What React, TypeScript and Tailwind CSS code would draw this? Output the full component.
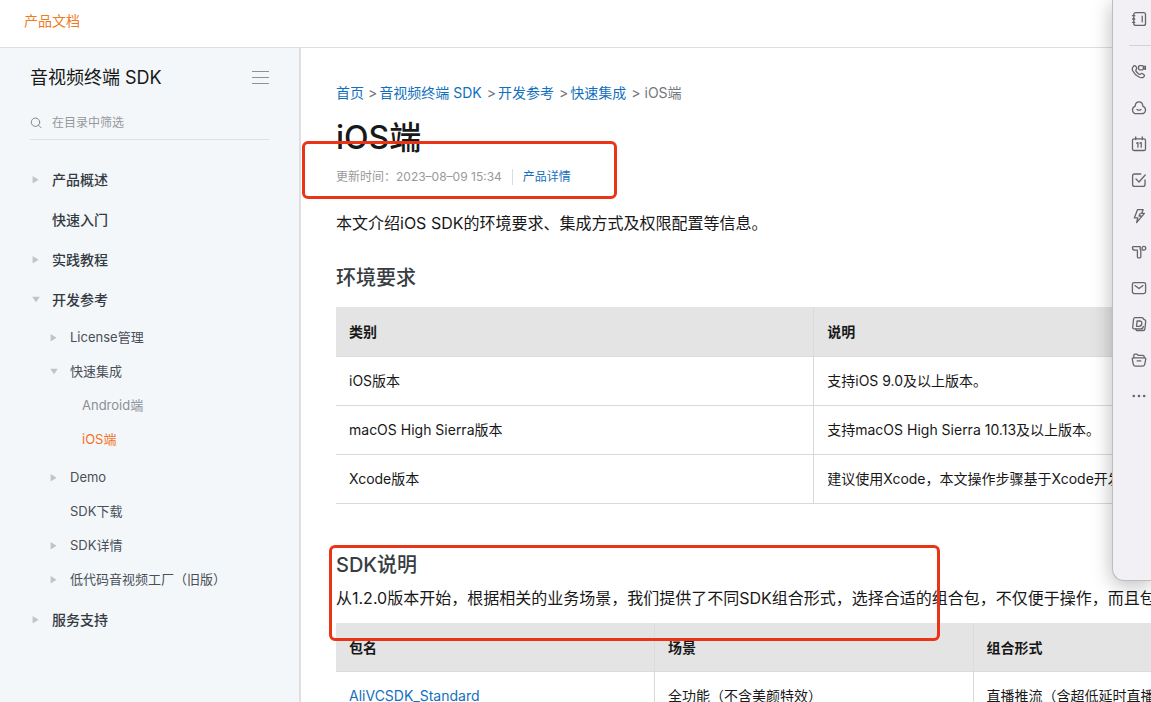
import { Fragment, type ReactNode } from "react";

type NavItem = {
  label: string;
  arrow?: "right" | "down";
  active?: boolean;
  children?: NavItem[];
};

const nav: NavItem[] = [
  { label: "产品概述", arrow: "right" },
  { label: "快速入门" },
  { label: "实践教程", arrow: "right" },
  {
    label: "开发参考",
    arrow: "down",
    children: [
      { label: "License管理", arrow: "right" },
      {
        label: "快速集成",
        arrow: "down",
        children: [{ label: "Android端" }, { label: "iOS端", active: true }],
      },
      { label: "Demo", arrow: "right" },
      { label: "SDK下载" },
      { label: "SDK详情", arrow: "right" },
      { label: "低代码音视频工厂（旧版）", arrow: "right" },
    ],
  },
  { label: "服务支持", arrow: "right" },
];

const levelStyles = [
  "h-10 pl-[31px] text-sm font-medium text-[#333a42]",
  "h-[34px] pl-[49px] text-[13px] text-[#4a4f57]",
  "h-[34px] pl-[61px] text-[13px] text-[#8b9096]",
];

const listStyles = ["", "pt-px pb-[3px]", "pb-1"];

function Arrow({ dir }: { dir?: "right" | "down" }) {
  return (
    <svg viewBox="0 0 10 10" className="size-[10px] shrink-0 fill-[#c0c4c9]" aria-hidden="true">
      {dir === "right" && <path d="M1.600 1v7.400L7.600 4.700z" />}
      {dir === "down" && <path d="M1.200 1.800h7.600L5 7.200z" />}
    </svg>
  );
}

function NavList({ items, level }: { items: NavItem[]; level: number }) {
  return (
    <ul className={listStyles[level]}>
      {items.map((item) => (
        <li key={item.label}>
          <a href="#" className={`flex items-center ${levelStyles[level]}`}>
            {level < 2 && <Arrow dir={item.arrow} />}
            <span className={level < 2 ? "ml-[11px]" : item.active ? "ml-[21px] text-[#f4711f]" : "ml-[21px]"}>
              {item.label}
            </span>
          </a>
          {item.children && <NavList items={item.children} level={level + 1} />}
        </li>
      ))}
    </ul>
  );
}

function DocTable({ head, rows }: { head: string[]; rows: ReactNode[][] }) {
  return (
    <table className="w-full table-fixed border-collapse text-left text-sm text-[#181818]">
      <thead>
        <tr className="h-[49px] bg-[#e4e4e4]">
          {head.map((h) => (
            <th key={h} className="border-r border-b border-[#dcdcdc] px-[13px] pt-[2px] font-bold">
              {h}
            </th>
          ))}
        </tr>
      </thead>
      <tbody>
        {rows.map((row, i) => (
          <tr key={i} className="h-[49px]">
            {row.map((cell, j) => (
              <td key={j} className="border-r border-b border-[#d9d9d9] px-[13px] whitespace-nowrap">
                {cell}
              </td>
            ))}
          </tr>
        ))}
      </tbody>
    </table>
  );
}

const tools: { name: string; art: ReactNode }[] = [
  {
    name: "音视频会议",
    art: (
      <>
        <path d="M2.2 2.6c.8-1 1.7-1.2 2.4-.5l1 1.5c.4.7.2 1.3-.4 1.8-.6.5-.6 1-.2 1.7.8 1.4 1.8 2.3 3.1 3.1.7.4 1.2.3 1.7-.3.6-.6 1.2-.6 1.8-.2l1.4 1c.7.6.6 1.5-.3 2.2-1.3 1-2.9 1-4.7.1C5 11.600 2.9 9.300 1.7 6.800c-.7-1.600-.5-3 .5-4.200z" />
        <rect x="7.6" y="1.6" width="4.8" height="4.2" rx="1" />
        <path d="M12.4 3.200l2-1v3.200l-2-1" />
      </>
    ),
  },
  {
    name: "云盘",
    art: (
      <>
        <path d="M4.200 6.200C4.300 3.500 5.800 1.800 8 1.800s3.700 1.700 3.800 4.400c1.700.6 2.700 2 2.700 3.800 0 2.200-1.700 3.700-3.900 3.700H5.400c-2.200 0-3.900-1.500-3.900-3.700 0-1.800 1-3.200 2.700-3.800z" />
        <path d="M6 9.400c1.200.9 2.800.9 4 0" />
      </>
    ),
  },
  {
    name: "日历",
    art: (
      <>
        <rect x="1.500" y="2.800" width="13" height="11.700" rx="1.600" />
        <path d="M4.700 1v2.600M11.300 1v2.600M5.600 7.100l1.300-.5v4.600M8.900 7.100l1.300-.5v4.600" />
      </>
    ),
  },
  {
    name: "待办",
    art: (
      <>
        <path d="M9.800 2H3.600C2.400 2 1.600 2.800 1.600 4v8.400c0 1.200.8 2 2 2H12c1.200 0 2-.8 2-2V8" />
        <path d="M5 7l3 3 6.200-7" />
      </>
    ),
  },
  {
    name: "快捷",
    art: <path d="M6.600 1.600h5.600l-1.600 3.800h2.800L5.600 14.600l1.200-4.800H3.400zM9.200 5.400L8 8h2" />,
  },
  {
    name: "模板",
    art: (
      <>
        <path d="M2.300 2.600h6.900v3.200h.6v7.200c0 .5-.3.8-.8.800H7.200c-.5 0-.8-.3-.8-.8V6.200H3.800c-1.300 0-2.300-.8-2.300-2.100v-.7c0-.5.300-.8.800-.8z" />
        <circle cx="12.900" cy="4.200" r="1.900" />
      </>
    ),
  },
  {
    name: "邮箱",
    art: (
      <>
        <rect x="1.400" y="2.600" width="13.200" height="11" rx="1.800" />
        <path d="M4 5.600l4 3 4-3" />
      </>
    ),
  },
  {
    name: "文档",
    art: (
      <>
        <path d="M4.200 1.600h6.700c1 0 1.500.7 1.500 1.500l1.500.7c.6.3.9.8.8 1.500l-.8 7.600c-.1 1-.8 1.600-1.700 1.600H5.500l-.7-1.600H3.200c-1 0-1.600-.7-1.500-1.700l.9-8.200c.1-.9.7-1.400 1.600-1.400z" />
        <path d="M6.100 5h2.500c1.600 0 2.400.9 2.200 2.600-.2 1.700-1.300 2.700-2.900 2.700H5.500zM4.800 12.900h4.700c1.600 0 2.600-1 2.800-2.600" />
      </>
    ),
  },
  {
    name: "文件夹",
    art: (
      <>
        <path d="M2.800 5.800V3.600c0-.9.500-1.400 1.300-1.400h2l1.300 1.200h4.500c.8 0 1.300.5 1.300 1.300v1.100" />
        <path d="M2.400 5.800h11.200c.9 0 1.300.6 1.100 1.500l-1 5c-.3 1.300-1 1.900-2.200 1.900h-7c-1.200 0-1.900-.6-2.200-1.900l-1-5c-.2-.9.2-1.500 1.100-1.500zM6.200 8.900h3.600" />
      </>
    ),
  },
  {
    name: "更多",
    art: (
      <g className="fill-[#666568] stroke-none">
        <circle cx="2.800" cy="8" r="1.300" />
        <circle cx="8" cy="8" r="1.300" />
        <circle cx="13.200" cy="8" r="1.300" />
      </g>
    ),
  },
];

function ToolButton({ name, children }: { name: string; children: ReactNode }) {
  return (
    <button type="button" aria-label={name} className="flex h-9 w-full items-center pl-[18px]">
      <svg
        viewBox="0 0 16 16"
        className="size-4 shrink-0 fill-none stroke-[#666568] stroke-[1.3]"
        strokeLinecap="round"
        strokeLinejoin="round"
        aria-hidden="true"
      >
        {children}
      </svg>
    </button>
  );
}

const crumbs = ["首页", "音视频终端 SDK", "开发参考", "快速集成"];

export default function App() {
  return (
    <div className="relative flex h-screen flex-col overflow-hidden bg-white font-['Inter','Noto_Sans_CJK_SC',sans-serif] text-[#181818]">
      <header className="flex h-12 shrink-0 items-center border-b border-[#dedede] px-6 pb-[5px]">
        <a href="#" className="text-sm text-[#ec7c22]">
          产品文档
        </a>
      </header>

      <div className="flex min-h-0 flex-1">
        <aside className="w-[301px] shrink-0 border-r-2 border-[#dedfe0] bg-[#f3f7fa]">
          <div className="flex h-[59px] items-center justify-between px-[30px]">
            <h2 className="text-lg">音视频终端 SDK</h2>
            <button type="button" aria-label="菜单" className="flex w-[17px] flex-col gap-[5px]">
              <span className="h-px bg-[#8f9295]" />
              <span className="h-px bg-[#8f9295]" />
              <span className="h-px bg-[#8f9295]" />
            </button>
          </div>
          <div className="mx-[30px] flex h-[33px] items-center border-b border-[#dfe2e4]">
            <svg
              viewBox="0 0 12 12"
              className="size-3 shrink-0 fill-none stroke-[#85888b]"
              strokeLinecap="round"
              aria-hidden="true"
            >
              <circle cx="5.500" cy="5.200" r="4.200" />
              <path d="M8.700 8.400l2.300 2.300" />
            </svg>
            <input
              type="text"
              aria-label="在目录中筛选"
              placeholder="在目录中筛选"
              className="ml-[10px] min-w-0 flex-1 bg-transparent text-xs outline-none placeholder:text-[#96999c]"
            />
          </div>
          <nav className="pt-5">
            <NavList items={nav} level={0} />
          </nav>
        </aside>

        <main className="relative min-w-0 flex-1 overflow-hidden">
          <article className="w-full min-w-[991px] pt-[34px] pl-[35px]">
            <nav className="flex h-[22px] items-center text-sm text-[#73777a]" aria-label="面包屑">
              {crumbs.map((c, i) => (
                <Fragment key={c}>
                  <a href="#" className="text-[#1270bd]">
                    {c}
                  </a>
                  <span className={i === 0 ? "ml-1 mr-[2px]" : "ml-[5px] mr-[2px]"}>&gt;</span>
                </Fragment>
              ))}
              <span className="ml-[2px]">iOS端</span>
            </nav>
            <h1 className="mt-[13px] text-[32px] leading-[42px] font-medium">iOS端</h1>
            <div className="mt-2 flex h-5 items-center text-xs text-[#999]">
              <span>更新时间：2023–08–09 15:34</span>
              <a href="#" className="ml-[10px] border-l border-[#dcdcdc] pl-[10px] text-[#1270bd]">
                产品详情
              </a>
            </div>
            <p className="mt-6 text-base">本文介绍iOS SDK的环境要求、集成方式及权限配置等信息。</p>
            <h2 className="mt-[29px] mb-[15px] text-xl font-medium text-[#373d41]">环境要求</h2>
            <DocTable
              head={["类别", "说明"]}
              rows={[
                ["iOS版本", "支持iOS 9.0及以上版本。"],
                ["macOS High Sierra版本", "支持macOS High Sierra 10.13及以上版本。"],
                ["Xcode版本", "建议使用Xcode，本文操作步骤基于Xcode开发。"],
              ]}
            />
            <h2 className="mt-[47px] text-xl font-medium text-[#373d41]">SDK说明</h2>
            <p className="mt-[7px] mb-[13px] text-base whitespace-nowrap">
              从1.2.0版本开始，根据相关的业务场景，我们提供了不同SDK组合形式，选择合适的组合包，不仅便于操作，而且包
            </p>
            <DocTable
              head={["包名", "场景", "组合形式"]}
              rows={[
                [
                  <a href="#" className="text-[#1270bd]">
                    AliVCSDK_Standard
                  </a>,
                  "全功能（不含美颜特效）",
                  "直播推流（含超低延时直播）",
                ],
              ]}
            />
          </article>
          <div className="pointer-events-none absolute top-[93px] left-px h-[58px] w-[315px] rounded-md border-3 border-[#ea3415]" />
          <div className="pointer-events-none absolute top-[497px] left-7 h-24 w-[611px] rounded-md border-3 border-[#ea3415]" />
        </main>
      </div>

      <aside className="absolute top-0 right-0 h-[581px] w-[39px] rounded-bl-xl border-b border-l border-[#bdbcbe] bg-[#f2f0f4] shadow-[0_4px_20px_rgba(0,0,0,0.28)]">
        <div className="mb-2 ml-4 border-b border-[#d3d1d5] pt-px pb-2">
          <div className="-ml-4">
            <ToolButton name="通讯录">
              <rect x="2.800" y="1.600" width="11.700" height="12.800" rx="2" />
              <path d="M11.200 5.200v5.600M1.500 4.700h2.300M1.500 8h2.300M1.500 11.300h2.300" />
            </ToolButton>
          </div>
        </div>
        {tools.map((t) => (
          <ToolButton key={t.name} name={t.name}>
            {t.art}
          </ToolButton>
        ))}
      </aside>
    </div>
  );
}
